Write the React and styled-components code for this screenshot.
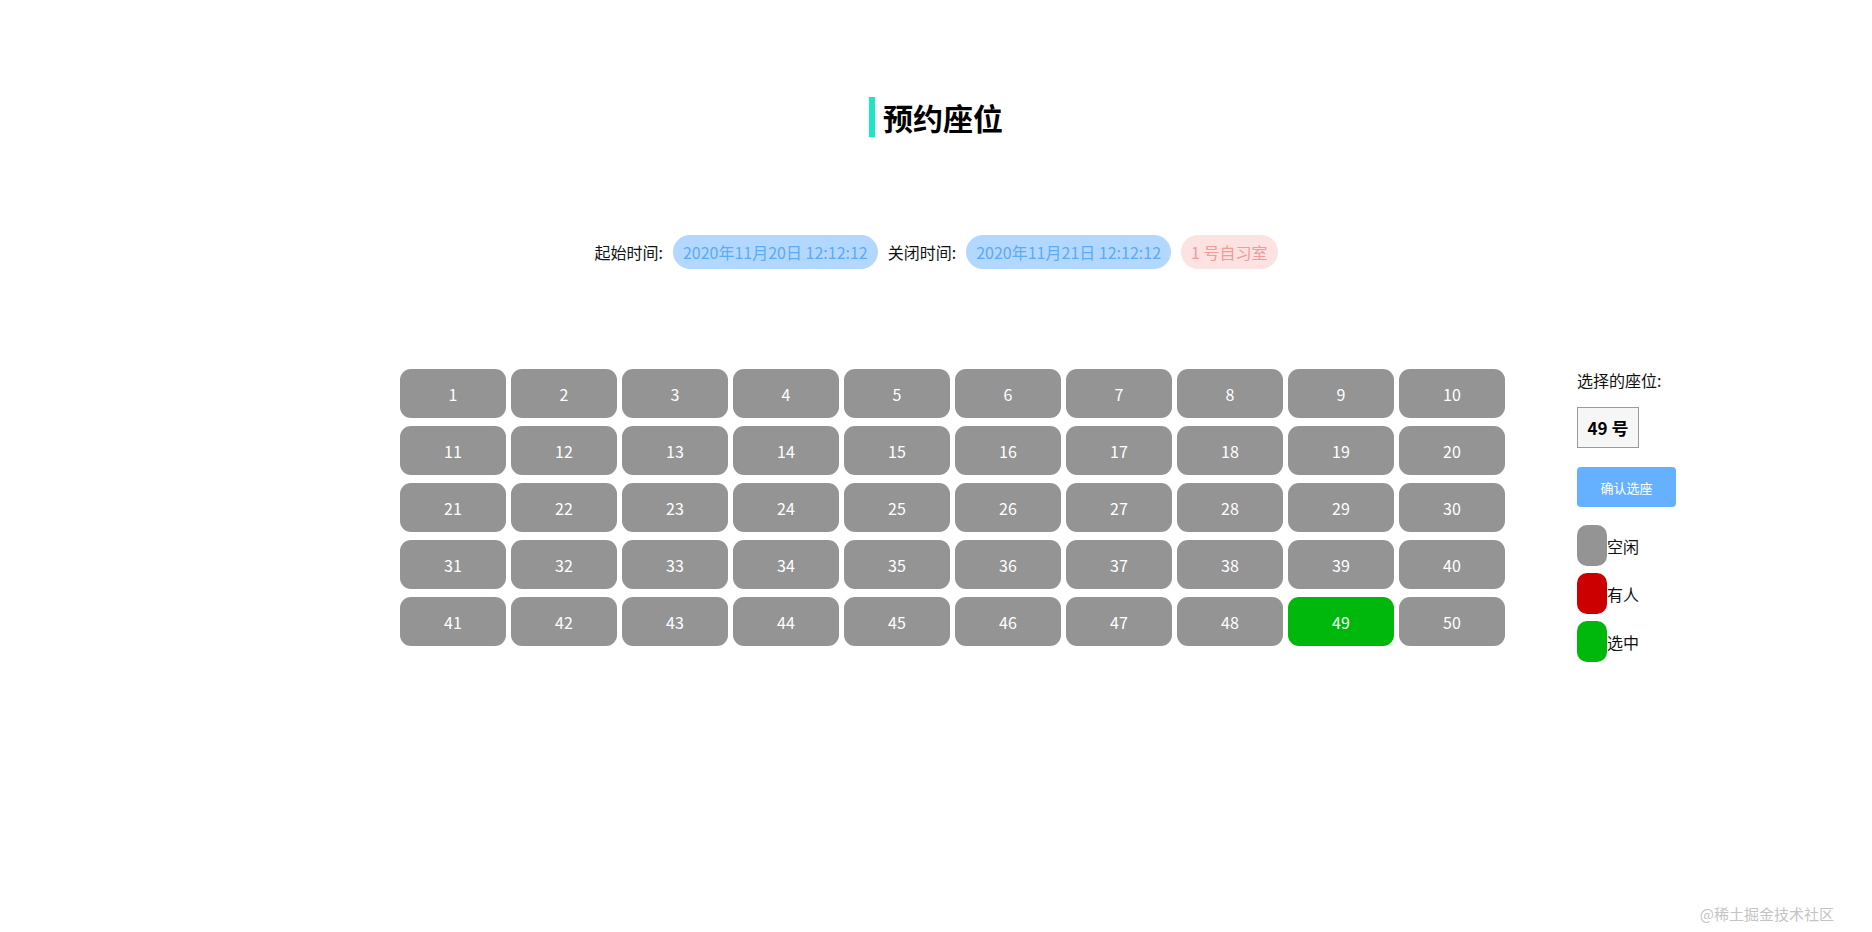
import { createGlobalStyle, styled } from 'styled-components'
import { useState } from 'react'

const GlobalStyle = createGlobalStyle`
    html, body {
        margin: 0;
        padding: 0;
        background: #fff;
    }
    body {
        font-family: "Noto Sans CJK SC", "Noto Sans", sans-serif;
        color: #222;
    }
`

const Page = styled.div`
    width: 1872px;
    height: 932px;
    padding-top: 97px;
    box-sizing: border-box;
    position: relative;
    overflow: hidden;
`

const TitleWrap = styled.div`
    display: flex;
    justify-content: center;
`

const Title = styled.h1`
    margin: 0;
    height: 40px;
    line-height: 40px;
    font-size: 30px;
    font-weight: 700;
    color: #000;
    border-left: 6px solid #1de6c6;
    padding-left: 8px;
`

const TimeRow = styled.div`
    margin-top: 98px;
    display: flex;
    justify-content: center;
    align-items: center;
    gap: 10px;
    font-size: 16px;
`

const Label = styled.span`
    color: #111;
    font-size: 16px;
`

const Pill = styled.span`
    height: 34px;
    line-height: 34px;
    padding: 0 10px;
    border-radius: 17px;
    background: ${p => (p.$red ? '#fde2e2' : '#b3d8ff')};
    color: ${p => (p.$red ? '#f39a9a' : '#5eaaf5')};
`

const Main = styled.div`
    margin-top: 100px;
    padding-left: 400px;
    display: flex;
    align-items: flex-start;
`

const SeatGrid = styled.div`
    display: grid;
    grid-template-columns: repeat(10, 106px);
    grid-auto-rows: 49px;
    column-gap: 5px;
    row-gap: 8px;
`

const Seat = styled.button`
    border: none;
    border-radius: 11px;
    background: ${p => p.$bg};
    color: #fff;
    font-family: "Noto Sans CJK SC", "Noto Sans", sans-serif;
    font-size: 16px;
    cursor: pointer;
    padding: 0;
`

const Side = styled.div`
    margin-left: 72px;
    display: flex;
    flex-direction: column;
    align-items: flex-start;
`

const SideTitle = styled.div`
    font-size: 16px;
    line-height: 22px;
    color: #111;
`

const Chosen = styled.div`
    margin-top: 16px;
    width: 62px;
    height: 41px;
    box-sizing: border-box;
    border: 1px solid #9a9a9a;
    background: #f6f6f6;
    display: flex;
    align-items: center;
    justify-content: center;
    font-size: 17px;
    font-weight: 700;
    color: #000;
`

const ConfirmButton = styled.button`
    margin-top: 19px;
    width: 99px;
    height: 40px;
    border: none;
    border-radius: 4px;
    background: #66b1ff;
    color: #fff;
    font-family: "Noto Sans CJK SC", "Noto Sans", sans-serif;
    font-size: 13px;
    cursor: pointer;
`

const Legend = styled.div`
    margin-top: 18px;
    display: flex;
    flex-direction: column;
    gap: 7px;
`

const LegendItem = styled.div`
    display: flex;
    align-items: center;
    font-size: 16px;
    color: #111;
`

const Swatch = styled.span`
    width: 30px;
    height: 41px;
    border-radius: 10px;
    background: ${p => p.$bg};
`

const Mark = styled.div`
    position: absolute;
    right: 38px;
    bottom: 8px;
    font-size: 15px;
    color: #c4c4c4;
`

const GRAY = '#949494'
const GREEN = '#00b80c'
const RED = '#cc0000'

export default function App() {
    const [selected, setSelected] = useState(49)
    const seats = Array.from({ length: 50 }, (_, i) => i + 1)

    return (
        <Page>
            <GlobalStyle />
            <TitleWrap>
                <Title>预约座位</Title>
            </TitleWrap>
            <TimeRow>
                <Label>起始时间:</Label>
                <Pill>2020年11月20日 12:12:12</Pill>
                <Label>关闭时间:</Label>
                <Pill>2020年11月21日 12:12:12</Pill>
                <Pill $red>1 号自习室</Pill>
            </TimeRow>
            <Main>
                <SeatGrid>
                    {seats.map(n => (
                        <Seat key={n} $bg={n === selected ? GREEN : GRAY} onClick={() => setSelected(n)}>
                            {n}
                        </Seat>
                    ))}
                </SeatGrid>
                <Side>
                    <SideTitle>选择的座位:</SideTitle>
                    <Chosen>{selected} 号</Chosen>
                    <ConfirmButton>确认选座</ConfirmButton>
                    <Legend>
                        <LegendItem><Swatch $bg={GRAY} />空闲</LegendItem>
                        <LegendItem><Swatch $bg={RED} />有人</LegendItem>
                        <LegendItem><Swatch $bg={GREEN} />选中</LegendItem>
                    </Legend>
                </Side>
            </Main>
            <Mark>@稀土掘金技术社区</Mark>
        </Page>
    )
}
